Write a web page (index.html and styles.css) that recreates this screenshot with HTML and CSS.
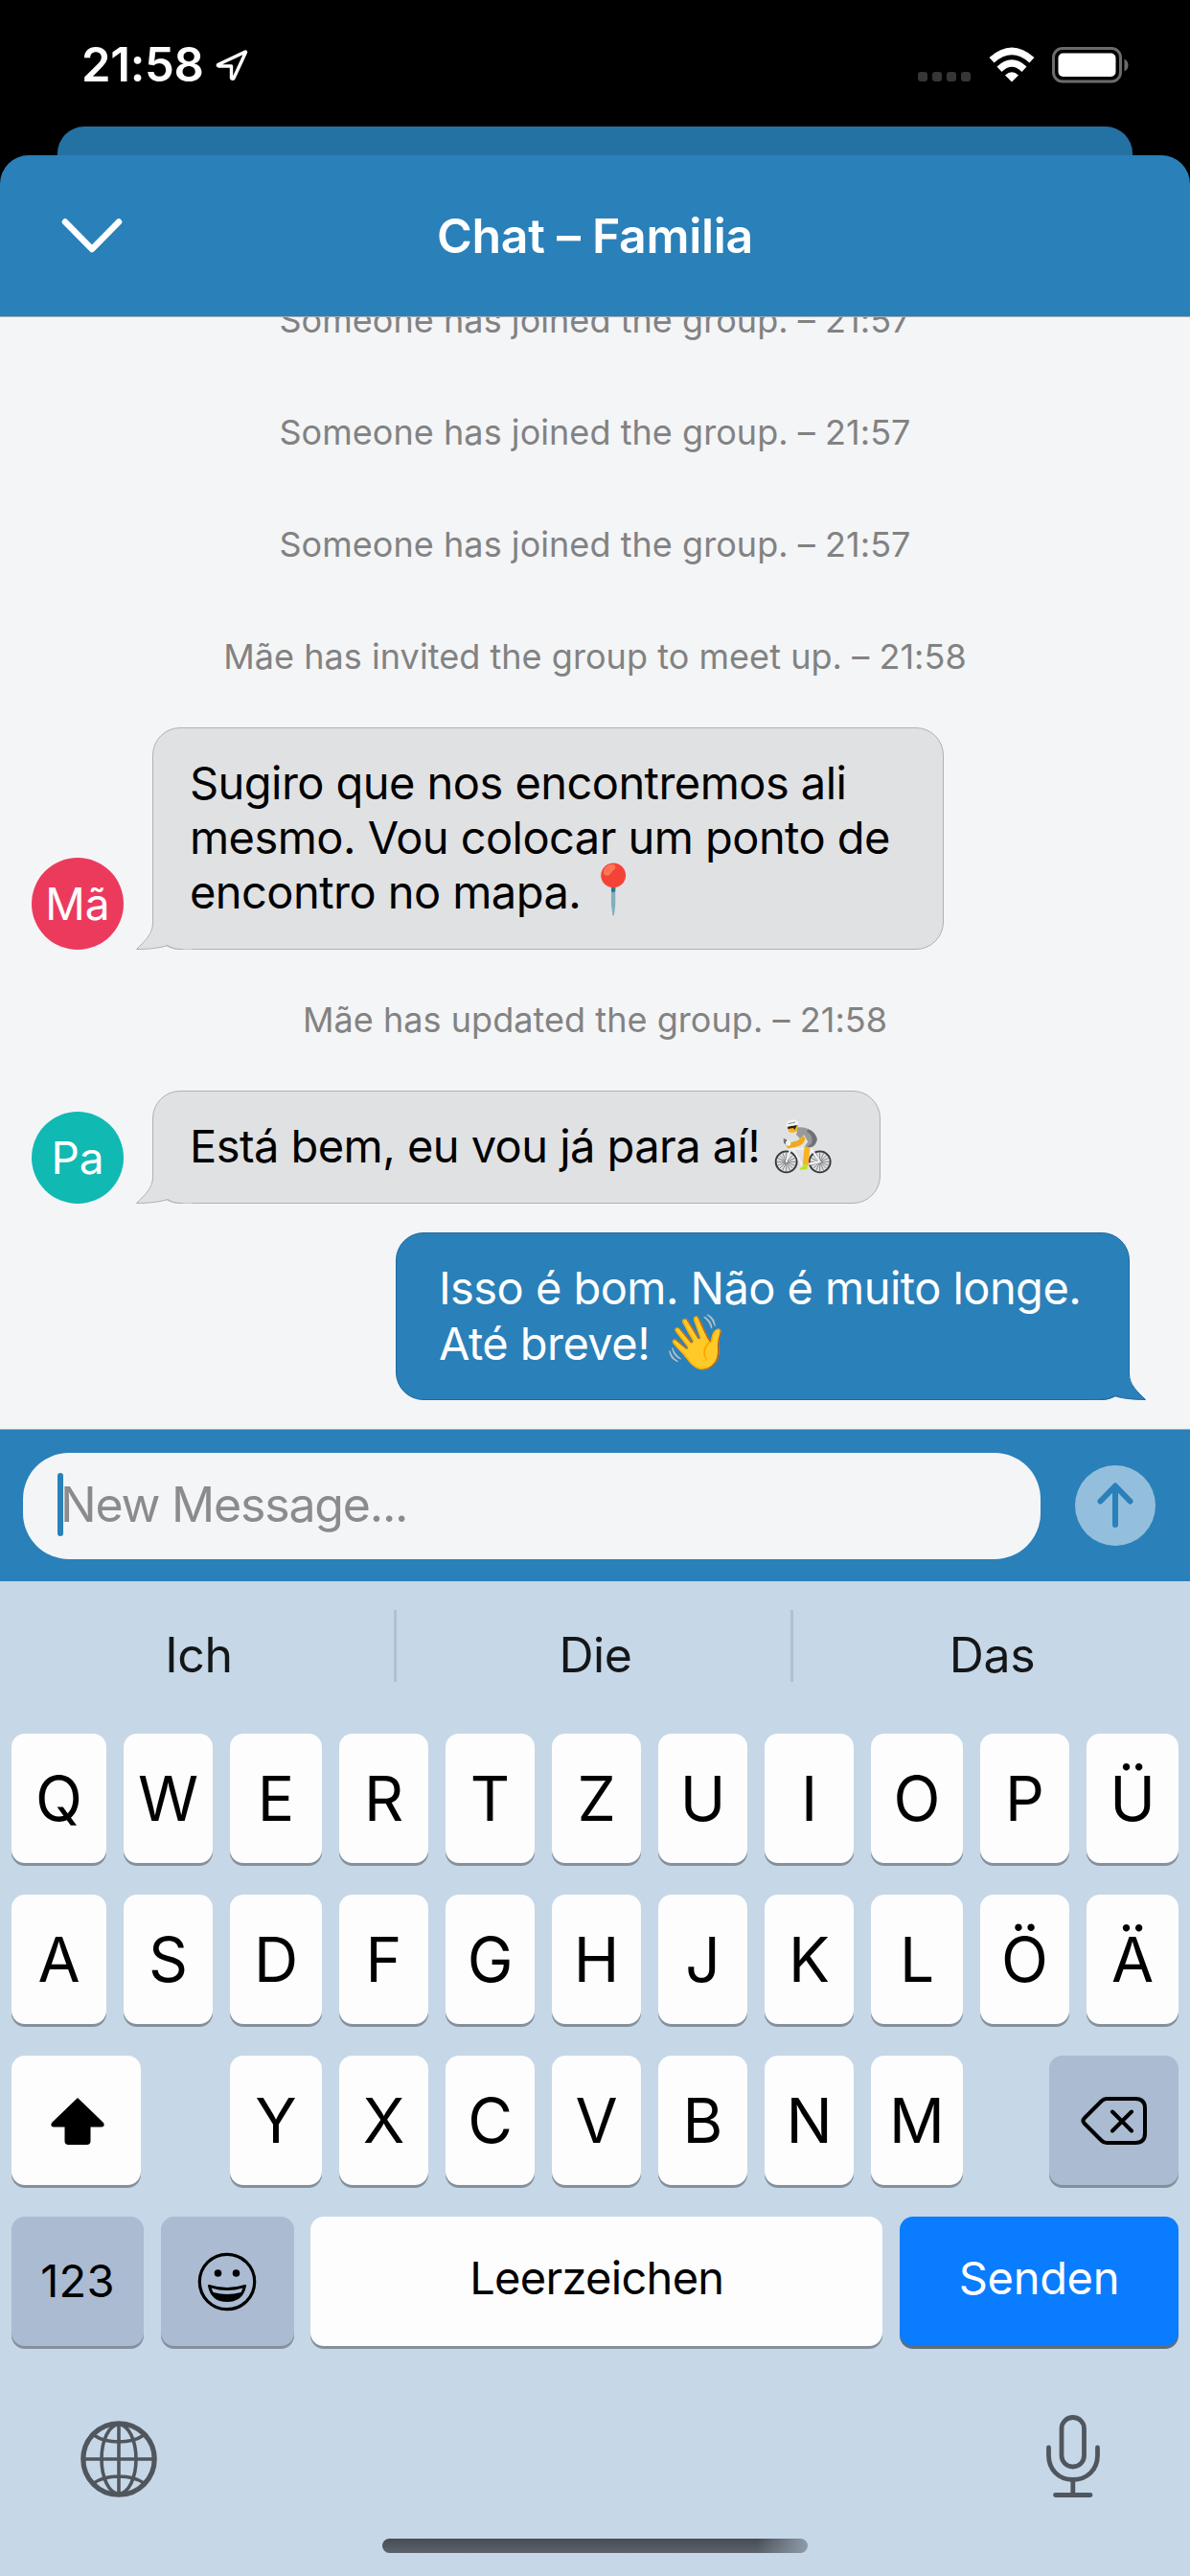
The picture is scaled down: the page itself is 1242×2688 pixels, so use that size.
FILE: index.html
```html
<!DOCTYPE html>
<html lang="pt">
<head>
<meta charset="utf-8">
<title>Chat – Familia</title>
<link rel="stylesheet" href="styles.css">
</head>
<body>
<svg class="defs" width="0" height="0">
  <symbol id="tail" viewBox="0 0 60 34">
    <path class="tail-fill" d="M19 3C19 15 10 22 1.500 30.500C15 30.500 27 29 34 26.500C38 29 42 30.500 48 30.500L60 30.500V3Z"/>
    <path class="tail-line" d="M18.500 3C18.500 15 10 22 1.500 30.500C15 30.500 27 29 34 26.500C38 29 42 30.500 50 30.500"/>
  </symbol>
</svg>
<div class="phone">
  <div class="status">
    <span class="clock">21:58</span>
    <svg class="location" width="34" height="34" viewBox="0 0 34 34"><path d="M31 3L2.500 16.500Q2 18 3.500 18H16.500V30.500Q18 32 19 30.500L31.500 3.500Q31.500 2.700 31 3Z" fill="none" stroke="#fff" stroke-width="3.400" stroke-linejoin="round"/></svg>
    <span class="signal"><i></i><i></i><i></i><i></i></span>
    <svg class="wifi" width="48" height="37" viewBox="0 0 48 37"><g fill="#fff"><path d="M0.500 11Q24-10 47.500 11L42.500 16.500Q24 0 5.500 16.500Z"/><path d="M8.500 20.500Q24 6 39.500 20.500L34.500 26Q24 15.500 13.500 26Z"/><path d="M17 29.500Q24 23 31 29.500L24 36.500Z"/></g></svg>
    <svg class="battery" width="80" height="38" viewBox="0 0 80 38"><rect x="1.500" y="1.500" width="70" height="34.500" rx="9.500" fill="none" stroke="#6c6c6c" stroke-width="3"/><rect x="6.500" y="6.500" width="60" height="24.500" rx="5" fill="#fff"/><path d="M75.500 12.500Q79.500 14.500 79.500 19T75.500 25.500Z" fill="#6c6c6c"/></svg>
  </div>
  <div class="sheet-behind"></div>
  <header class="header">
    <svg class="chevron" width="64" height="38" viewBox="0 0 64 38"><path d="M4 4.500L32 33L60 4.500" fill="none" stroke="#fff" stroke-width="6.500" stroke-linecap="round" stroke-linejoin="round"/></svg>
    <h1 class="title">Chat – Familia</h1>
  </header>
  <main class="chat">
    <p class="notice">Someone has joined the group. – 21:57</p>
    <p class="notice">Someone has joined the group. – 21:57</p>
    <p class="notice">Someone has joined the group. – 21:57</p>
    <p class="notice">Mãe has invited the group to meet up. – 21:58</p>
    <div class="message">
      <span class="avatar avatar-mae">Mã</span>
      <div class="bubble bubble-long">Sugiro que nos encontremos ali<br>mesmo. Vou colocar um ponto de<br>encontro no mapa.<span class="emoji pin">📍</span><svg class="tail" width="60" height="34"><use href="#tail"/></svg></div>
    </div>
    <p class="notice">Mãe has updated the group. – 21:58</p>
    <div class="message">
      <span class="avatar avatar-pai">Pa</span>
      <div class="bubble bubble-short">Está bem, eu vou já para aí!<svg class="cyclist" role="img" aria-label="🚴" width="60" height="59" viewBox="84 51 180 177">
        <g fill="none" stroke-linecap="round">
          <g stroke="#3a3a3c" stroke-width="5.500"><circle cx="122" cy="190" r="33"/><circle cx="227" cy="190" r="33"/></g>
          <g stroke="#66676a" stroke-width="2.200"><path d="M122 160V220M92 190H152M101 169L143 211M143 169L101 211M110 162L134 218M134 162L110 218M94 178L150 202M150 178L94 202"/><path d="M227 160V220M197 190H257M206 169L248 211M248 169L206 211M215 162L239 218M239 162L215 218M199 178L255 202M255 178L199 202"/></g>
          <path d="M122 190L138 142L172 200L202 152L227 190L176 200M138 150L196 148" stroke="#f4f4f4" stroke-width="6"/>
          <path d="M172 118C172 130 154 135 130 139" stroke="#efa91d" stroke-width="17"/>
          <path d="M188 140L182 200" stroke="#f6b425" stroke-width="18" stroke-linecap="butt"/>
        </g>
        <path d="M153 83C180 77 214 92 219 118Q218 136 202 145L184 143Q180 135 190 128L178 106L164 116L152 104Q160 96 153 83Z" fill="#97999b"/>
        <path d="M186 96Q208 106 201 133L187 143Q211 148 218 120Q213 97 190 88Z" fill="#707174"/>
        <path d="M126 78Q124 98 140 99L155 95L160 76Z" fill="#f5b321"/>
        <path d="M126 80L156 74L148 90L144 84L127 87Z" fill="#202020"/>
        <path d="M121 76Q123 60 142 58Q156 58 161 69L155 75L122 80Z" fill="#f2f3f3"/><path d="M128 71L150 66" stroke="#888" stroke-width="3"/>
        <path d="M113 117L123 120L124 139L114 131Z" fill="#707378"/><circle cx="128" cy="132" r="8" fill="#f3f3f5"/>
        <path d="M173 199L189 202L187 213L164 215Q162 209 173 206Z" fill="#b5e61d"/>
      </svg><svg class="tail" width="60" height="34"><use href="#tail"/></svg></div>
    </div>
    <div class="message message-own">
      <div class="bubble bubble-own">Isso é bom. Não é muito longe.<br>Até breve!<span class="emoji wave">👋</span><svg class="tail" width="60" height="34"><use href="#tail"/></svg></div>
    </div>
  </main>
  <div class="composer">
    <div class="field"><span class="caret"></span><span class="placeholder">New Message...</span></div>
    <svg class="send" width="84" height="84" viewBox="0 0 84 84"><circle cx="42" cy="42" r="42" fill="#94bfdc"/><path d="M42 62V22M26.500 37.500L42 21.500L57.500 37.500" fill="none" stroke="#2a80b9" stroke-width="6" stroke-linecap="round" stroke-linejoin="round"/></svg>
  </div>
  <section class="keyboard">
    <div class="suggestions"><span>Ich</span><span>Die</span><span>Das</span></div>
    <div class="keys">
      <div class="row"><b>Q</b><b>W</b><b>E</b><b>R</b><b>T</b><b>Z</b><b>U</b><b>I</b><b>O</b><b>P</b><b>Ü</b></div>
      <div class="row"><b>A</b><b>S</b><b>D</b><b>F</b><b>G</b><b>H</b><b>J</b><b>K</b><b>L</b><b>Ö</b><b>Ä</b></div>
      <div class="row">
        <b class="shift"><svg width="58" height="52" viewBox="0 0 58 52"><path d="M29 2L56 28Q58 32 54 32.500H42.500V47Q42.500 51 38.500 51H19.500Q15.500 51 15.500 47V32.500H4Q0 32 2 28Z"/></svg></b>
        <b>Y</b><b>X</b><b>C</b><b>V</b><b>B</b><b>N</b><b>M</b>
        <b class="backspace gray"><svg width="70" height="52" viewBox="0 0 70 52"><path d="M27 3H57Q67 3 67 13V39Q67 49 57 49H27Q24 49 21.500 46.500L4 29Q1 26 4 23L21.500 5.500Q24 3 27 3ZM33 16.500L53 36.500M53 16.500L33 36.500" fill="none" stroke="#000" stroke-width="4" stroke-linecap="round" stroke-linejoin="round"/></svg></b>
      </div>
      <div class="row-bottom">
        <b class="numbers gray">123</b>
        <b class="smileys gray"><svg width="62" height="62" viewBox="0 0 62 62"><circle cx="31" cy="31" r="28.700" fill="none" stroke="#000" stroke-width="3.200"/><circle cx="21.500" cy="22" r="3.800"/><circle cx="40.500" cy="22" r="3.800"/><path d="M12 35Q31 41 50 35Q47 51 31 51T12 35Z" stroke="#000" stroke-width="2" stroke-linejoin="round"/><path d="M14.500 37.500Q31 42.500 47.500 37.500L45.500 42Q31 46 16.500 42Z" fill="#aabbd2"/></svg></b>
        <b class="space">Leerzeichen</b>
        <b class="return">Senden</b>
      </div>
    </div>
    <div class="tools">
      <svg width="80" height="80" viewBox="0 0 80 80"><g fill="none" stroke="#50565d" stroke-width="3.600"><circle cx="40" cy="40" r="37.200" stroke-width="5.200"/><ellipse cx="40" cy="40" rx="18" ry="36"/><path d="M40 4V76M4 40H76M14 15Q24 22 40 22T66 15M14 65Q24 58 40 58T66 65"/></g></svg>
      <svg width="58" height="86" viewBox="0 0 58 86"><g fill="none" stroke="#50565d" stroke-width="4.800" stroke-linecap="round"><rect x="17" y="2.500" width="23.500" height="51.500" rx="11.700"/><path d="M3.500 34V42C3.500 57 14 67.500 28.800 67.500S54.500 57 54.500 42V34M28.800 68V83M10.500 83.500H47"/></g></svg>
    </div>
    <div class="home"></div>
  </section>
</div>
</body>
</html>
```
FILE: styles.css
```css
* { box-sizing: border-box; }

body { margin: 0; background: #000; }

.defs { position: absolute; }

.phone {
  display: flex;
  flex-direction: column;
  width: 1242px;
  height: 2688px;
  background: #000;
  font-family: Inter, "Noto Color Emoji", sans-serif;
  overflow: hidden;
}

/* status bar */
.status {
  display: flex;
  align-items: center;
  height: 132px;
  padding: 3px 64px 0 85px;
  color: #fff;
}
.clock { font-size: 49px; font-weight: 600; line-height: 60px; letter-spacing: -0.300px; }
.location { margin-left: 12px; }
.signal { display: flex; gap: 5px; margin: 24px 19px 0 auto; }
.signal i { width: 10px; height: 10px; border-radius: 3px; background: #363636; }
.battery { margin-left: 18px; }

/* sheet */
.sheet-behind {
  height: 30px;
  margin: 0 60px;
  border-radius: 28px 28px 0 0;
  background: #2471a3;
}
.header {
  display: grid;
  grid-template-columns: 64px 1fr 64px;
  align-items: center;
  height: 168px;
  padding: 0 64px;
  border-radius: 30px 30px 0 0;
  background: #2a80b9;
  color: #fff;
}
.title {
  margin: 0;
  font-size: 50px;
  font-weight: 600;
  letter-spacing: -0.300px;
  text-align: center;
}

/* conversation */
.chat {
  display: flex;
  flex-direction: column;
  justify-content: flex-end;
  height: 1162px;
  padding-bottom: 15px;
  border-top: 1px solid #a6aaaf;
  border-bottom: 1px solid #a6aaaf;
  background: #f4f5f7;
  overflow: hidden;
}
.notice {
  flex: none;
  margin: 0;
  font-size: 36px;
  line-height: 117px;
  letter-spacing: 0.050px;
  color: #828282;
  text-align: center;
}
.message {
  display: flex;
  flex: none;
  align-items: flex-end;
  gap: 30px;
  margin: 15px 33px;
}
.message-own { justify-content: flex-end; margin-right: 63px; }
.avatar {
  width: 96px;
  height: 96px;
  border-radius: 50%;
  color: #fff;
  font-size: 46px;
  line-height: 97px;
  text-align: center;
}
.avatar-mae { background: #ec3a5d; }
.avatar-pai { background: #11b9b3; }
.bubble {
  position: relative;
  padding: 28px 0 30px 38px;
  border: 1px solid #afb1b4;
  border-radius: 29px;
  background: #e0e1e3;
  color: #000;
  font-size: 47px;
  line-height: 57.400px;
  letter-spacing: -0.550px;
  white-space: nowrap;
}
.bubble-long { width: 826px; }
.bubble-short { width: 760px; padding-bottom: 31px; }
.bubble-own {
  width: 766px;
  padding-left: 44px;
  border-color: #1f6a9f;
  background: #2a80b9;
  color: #fff;
}
.tail {
  --fill: #e0e1e3;
  --line: #afb1b4;
  position: absolute;
  left: -19px;
  bottom: -4px;
}
.tail-fill { fill: var(--fill); }
.tail-line { fill: none; stroke: var(--line); stroke-width: 1; }
.bubble-own .tail {
  --fill: #2a80b9;
  --line: #1f6a9f;
  left: auto;
  right: -19px;
  transform: scaleX(-1);
}
.emoji { display: inline-block; height: 50px; font-size: 50px; line-height: 50px; vertical-align: top; }
.pin { margin-left: 3px; }
.wave { margin-left: 14px; font-size: 56px; line-height: 55px; }
.cyclist { margin: -8px 0 -8px 15px; vertical-align: -4px; }

/* message field */
.composer {
  display: flex;
  align-items: center;
  justify-content: space-between;
  height: 158px;
  padding: 0 36px 0 24px;
  background: #2a80b9;
}
.field {
  display: flex;
  align-items: center;
  width: 1062px;
  height: 111px;
  padding-left: 36px;
  border-radius: 48px;
  background: #f4f5f7;
}
.caret { width: 6px; height: 66px; margin-top: -3px; border-radius: 3px; background: #2a80b9; }
.placeholder { margin: -2px 0 0 -3px; color: #8b8b8f; font-size: 50px; line-height: 60px; letter-spacing: -1.200px; }

/* keyboard */
.keyboard { flex: 1; background: #c6d7e7; }
.suggestions {
  display: grid;
  grid-template-columns: repeat(3, 414px);
  height: 159px;
  padding-top: 30px;
  color: #141618;
  font-size: 50px;
  line-height: 56px;
  letter-spacing: -0.400px;
  text-align: center;
}
.suggestions span { height: 75px; padding: 19px 0 0 4px; border-right: 3px solid #b0c1d0; }
.suggestions span:last-child { border-right-color: transparent; }
.keys { display: grid; row-gap: 33px; padding: 0 12px; }
.row {
  display: grid;
  grid-template-columns: 99px 93px 96px 93px 93px 93px 93px 93px 96px 93px 96px;
  column-gap: 18px;
}
.keys b {
  display: flex;
  align-items: center;
  justify-content: center;
  height: 135px;
  border-radius: 14px;
  background: #fdfdfd;
  box-shadow: 0 3px 0 #84909c;
  font-size: 64px;
  font-weight: 400;
}
.keys .gray { background: #aabbd2; }
.keys .shift { grid-column: 1 / span 2; width: 135px; padding-left: 2px; }
.keys .backspace { grid-column: 10 / span 2; width: 135px; justify-self: end; }
.row-bottom {
  display: grid;
  grid-template-columns: 138px 139px 597px 291px;
  justify-content: space-between;
}
.keys .numbers { padding-bottom: 2px; font-size: 47px; letter-spacing: 0.200px; }
.keys .space { padding-bottom: 9px; font-size: 47px; letter-spacing: -0.700px; }
.keys .return {
  padding-bottom: 9px;
  background: #0a7cff;
  color: #fff;
  font-size: 47px;
  letter-spacing: -0.300px;
  box-shadow: 0 3px 0 #5f6c7c;
}
.tools { display: flex; justify-content: space-between; align-items: flex-end; height: 158px; padding: 0 93px 0 84px; }
.home {
  width: 444px;
  height: 15px;
  margin: 43px auto 0;
  border-radius: 8px;
  background: linear-gradient(90deg, transparent 88%, #8d9ba8 100%), linear-gradient(#474b54, #5c636b);
}
```
